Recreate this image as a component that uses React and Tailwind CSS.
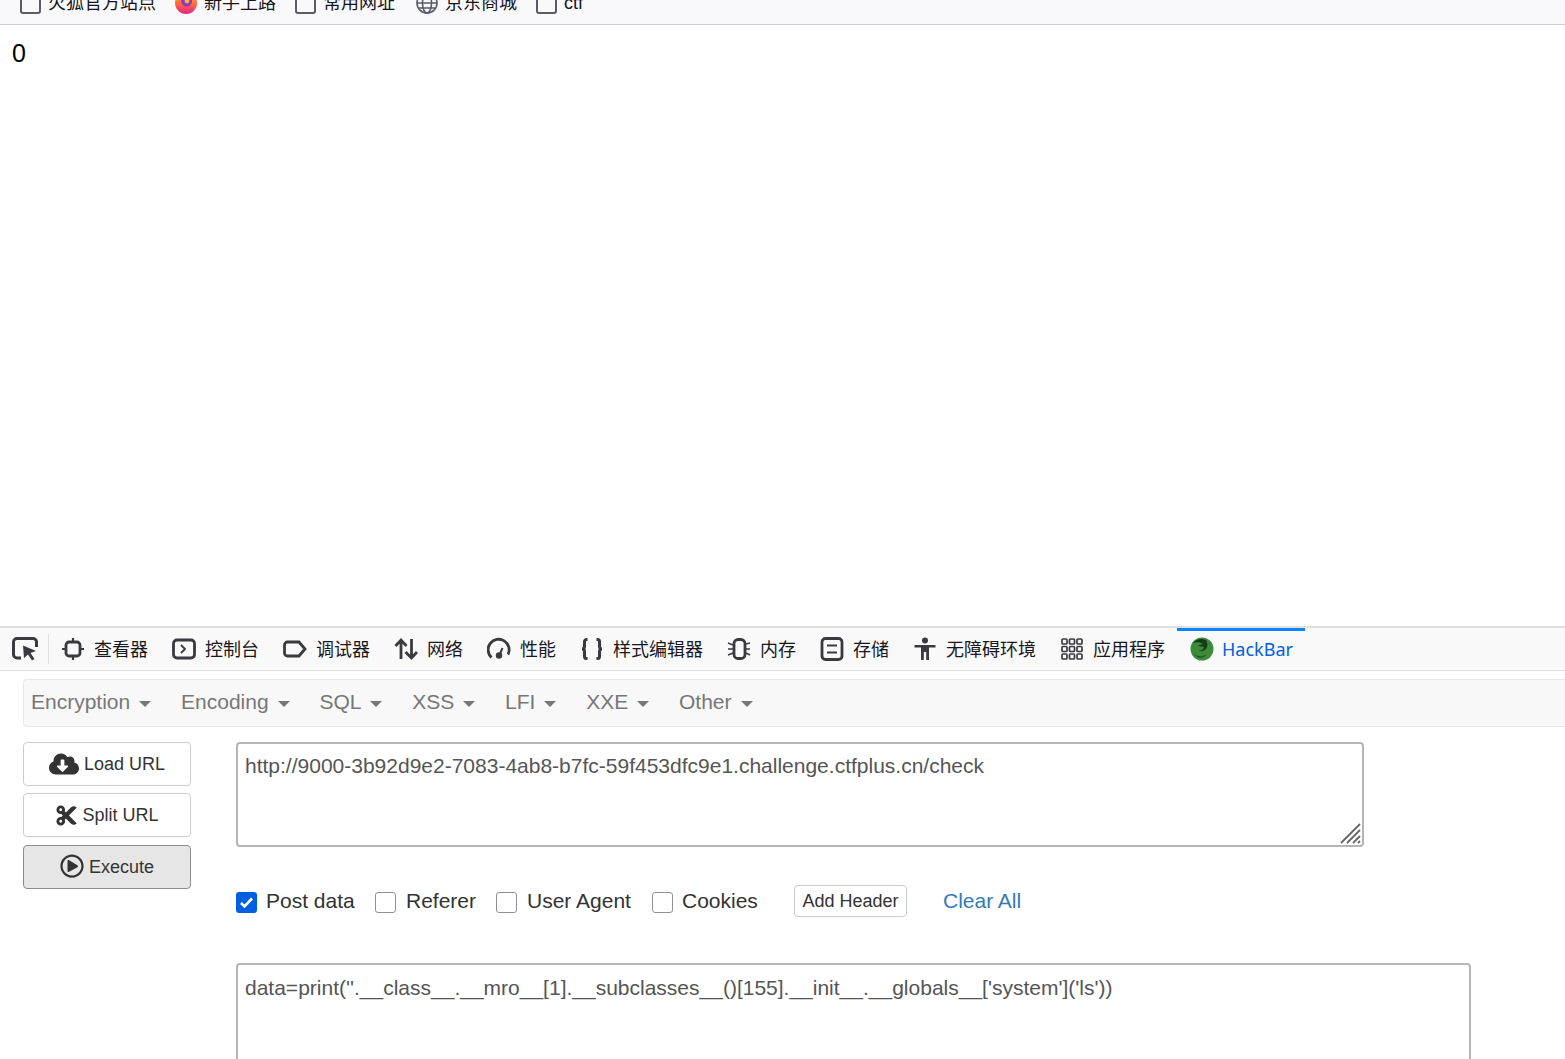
import React from 'react'
import { FaCloudDownloadAlt, FaCut, FaRegPlayCircle } from 'react-icons/fa'

const FolderIcon = () => (
  <span className="block w-[21px] h-[21px] shrink-0 rounded-[3px] border-2 border-[#5b5b66] bg-transparent" />
)

const FirefoxIcon = () => (
  <svg width="22" height="22" viewBox="0 0 22 22" className="shrink-0">
    <defs>
      <linearGradient id="fx" x1="0" y1="0" x2="0" y2="1">
        <stop offset="0" stopColor="#ffb22e" />
        <stop offset="0.55" stopColor="#ff6a3c" />
        <stop offset="1" stopColor="#e8208a" />
      </linearGradient>
    </defs>
    <circle cx="11" cy="11" r="11" fill="url(#fx)" />
    <circle cx="11.5" cy="9" r="5.5" fill="#8a3bc6" />
    <circle cx="12" cy="9" r="2.4" fill="#ffb22e" />
  </svg>
)

const GlobeIcon = () => (
  <svg width="22" height="22" viewBox="0 0 22 22" fill="none" stroke="#5b5b66" strokeWidth="1.6" className="shrink-0">
    <circle cx="11" cy="11" r="10" />
    <ellipse cx="11" cy="11" rx="4.5" ry="10" />
    <path d="M1 11h20M2.5 6h17M2.5 16h17" />
  </svg>
)

const tabIcon = (children, w = 24) => (
  <svg width={w} height="24" viewBox="0 0 24 24" fill="none" stroke="#3a3a3f" strokeWidth="2.8" className="shrink-0">
    {children}
  </svg>
)

const InspectorIcon = () =>
  tabIcon(
    <>
      <rect x="5" y="5" width="14" height="14" rx="3" />
      <path d="M12 1v4M12 19v4M1 12h4M19 12h4" strokeWidth="2.2" />
    </>
  )

const ConsoleIcon = () =>
  tabIcon(
    <>
      <rect x="1.5" y="3" width="21" height="18" rx="3.5" />
      <path d="M9 8l4 4-4 4" strokeWidth="1.8" />
    </>
  )

const DebuggerIcon = () =>
  tabIcon(<path d="M4.5 5h11.5l6 7-6 7H4.5a3 3 0 0 1-3-3V8a3 3 0 0 1 3-3z" />)

const NetworkIcon = () =>
  tabIcon(<path d="M7 22V3M1.500 9L7 3l5.500 6M17.500 2v19M11.500 15l6 6 5.500-6" />)

const PerfIcon = () =>
  tabIcon(
    <>
      <path d="M4.5 20.5A10.5 10.5 0 1 1 21 17.5" />
      <circle cx="12" cy="18.5" r="3.2" fill="#3a3a3f" stroke="none" />
      <path d="M12.5 18l3-7" strokeWidth="2" />
    </>
  )

const StyleIcon = () =>
  tabIcon(
    <path
      strokeWidth="3"
      d="M7.500 2.500H6.500a2 2 0 0 0-2 2v5c0 1.500-1 2.500-2.500 2.500 1.500 0 2.500 1 2.500 2.500v5a2 2 0 0 0 2 2h1M16.500 2.500h1a2 2 0 0 1 2 2v5c0 1.500 1 2.500 2.500 2.500-1.500 0-2.500 1-2.500 2.500v5a2 2 0 0 1-2 2h-1"
    />
  )

const MemoryIcon = () =>
  tabIcon(
    <>
      <rect x="7" y="2.500" width="11" height="19" rx="4" />
      <path d="M1 6l5 2M1 12h5M1 18l5-2M19 7l4-1M19 12h4M19 16l4 2" strokeWidth="1.400" />
    </>
  )

const StorageIcon = () =>
  tabIcon(
    <>
      <rect x="2" y="1.500" width="20" height="21" rx="3.500" />
      <path d="M7 8.500h10M7 15.500h10" strokeWidth="2" />
    </>
  )

const A11yIcon = () => (
  <svg width="24" height="24" viewBox="0 0 24 24" fill="#3a3a3f" className="shrink-0">
    <circle cx="12" cy="3.500" r="3" />
    <path d="M1.500 8h21v2.500H16V23h-2.800v-8h-2.400v8H8V10.500H1.500z" />
  </svg>
)

const AppsIcon = () => (
  <svg width="24" height="24" viewBox="0 0 24 24" fill="none" stroke="#3a3a3f" strokeWidth="1.700" className="shrink-0">
    {[2, 9.500, 17].map((y) =>
      [2, 9.500, 17].map((x) => <rect key={`${x}-${y}`} x={x} y={y} width="5" height="5" rx="1" />)
    )}
  </svg>
)

const HackBarIcon = () => (
  <svg width="24" height="24" viewBox="0 0 24 24" className="shrink-0">
    <circle cx="12" cy="12" r="11.500" fill="#3c8a3a" />
    <path d="M3 6c3-4 8-5 13-3 1 2 2 4 1 7-1 3-4 5-8 4 3-1 5-2 5-4-2 0-4-1-6-1 1-1 3-2 5-2-3-2-7-2-10-1z" fill="#143d14" />
    <path d="M4 17c4 3 9 3 13 0-3 5-10 5-13 0z" fill="#1f5a20" />
  </svg>
)

const PickIcon = () => (
  <svg width="26" height="24" viewBox="0 0 26 24" fill="none" stroke="#3a3a3f" strokeWidth="3" className="shrink-0">
    <path d="M9 21H5a3.500 3.500 0 0 1-3.500-3.500V5A3.500 3.500 0 0 1 5 1.500h16A3.500 3.500 0 0 1 24.500 5v5" />
    <path d="M11 8.500l13 5.500-5.500 2 4 6-2.500 1.500-4-6-4 3.500z" fill="#3a3a3f" stroke="none" />
  </svg>
)

const tabs = [
  { label: '查看器', Icon: InspectorIcon },
  { label: '控制台', Icon: ConsoleIcon },
  { label: '调试器', Icon: DebuggerIcon },
  { label: '网络', Icon: NetworkIcon },
  { label: '性能', Icon: PerfIcon },
  { label: '样式编辑器', Icon: StyleIcon },
  { label: '内存', Icon: MemoryIcon },
  { label: '存储', Icon: StorageIcon },
  { label: '无障碍环境', Icon: A11yIcon },
  { label: '应用程序', Icon: AppsIcon },
]

const menus = ['Encryption', 'Encoding', 'SQL', 'XSS', 'LFI', 'XXE', 'Other']

function Bookmark({ icon, label, className = 'mr-[19px]' }) {
  return (
    <div className={`flex items-center gap-[7px] ${className}`}>
      {icon}
      <span className="text-[18px] leading-[24px] text-[#15141a]">{label}</span>
    </div>
  )
}

function SideButton({ icon, label, active, gap = 'gap-[5px]' }) {
  return (
    <button
      className={`h-[44px] w-full flex items-center justify-center ${gap} rounded-[4px] border text-[18px] text-[#333] ${
        active ? 'bg-[#e6e6e6] border-[#8c8c8c]' : 'bg-white border-[#ccc]'
      }`}
    >
      {icon}
      {label}
    </button>
  )
}

function Check({ label, checked, className, labelGap = 'ml-[9px]' }) {
  return (
    <label className={`flex items-center ${className}`}>
      {checked ? (
        <span className="w-[21px] h-[21px] rounded-[3px] bg-[#0060df] flex items-center justify-center mt-[3px]">
          <svg width="15" height="15" viewBox="0 0 15 15" fill="none" stroke="white" strokeWidth="2.600">
            <path d="M2 8l3.500 3.500L13 3.500" />
          </svg>
        </span>
      ) : (
        <span className="w-[21px] h-[21px] rounded-[3px] border border-[#8f8f9d] bg-white mt-[3px]" />
      )}
      <span className={`${labelGap} text-[21px] leading-[24px] text-[#333]`}>{label}</span>
    </label>
  )
}

export default function App() {
  return (
    <div className="h-[1059px] w-full overflow-hidden bg-white flex flex-col font-['Liberation_Sans','Noto_Sans_CJK_SC',sans-serif]">
      {/* bookmarks toolbar, cut off by the top of the shot */}
      <div className="h-[25px] shrink-0 overflow-hidden bg-[#f9f9fb] border-b border-[#ccc]">
        <div className="flex items-center pl-[20px] -mt-[9px]">
          <Bookmark icon={<FolderIcon />} label="火狐官方站点" />
          <Bookmark icon={<FirefoxIcon />} label="新手上路" />
          <Bookmark icon={<FolderIcon />} label="常用网址" className="mr-[21px]" />
          <Bookmark icon={<GlobeIcon />} label="京东商城" />
          <Bookmark icon={<FolderIcon />} label="ctf" />
        </div>
      </div>

      <div className="h-[601px] shrink-0 pl-[12px] pt-[14px] text-[25px] leading-[28px] text-black">0</div>

      {/* devtools */}
      <div className="flex-1 min-h-0 flex flex-col">
        <div className="h-[45px] shrink-0 flex items-stretch bg-[#f9f9fa] border-t-2 border-b border-[#e0e0e2]">
          <div className="w-[49px] shrink-0 flex items-center pl-[12px] relative">
            <PickIcon />
            <span className="absolute right-0 top-[6px] h-[30px] w-px bg-[#e0e0e2]" />
          </div>
          <div className="flex items-stretch">
            {tabs.map(({ label, Icon }) => (
              <div key={label} className="flex items-center gap-[9px] px-3">
                <Icon />
                <span className="text-[18px] leading-[24px] text-[#18181a] mt-px">{label}</span>
              </div>
            ))}
            <div className="flex items-center gap-2 pl-[13px] pr-3 border-t-[3px] border-[#0a84ff]">
              <span className="-mt-[3px]">
                <HackBarIcon />
              </span>
              <span className="text-[18px] leading-[24px] text-[#0060df] font-['Noto_Sans',sans-serif] -mt-[3px]">HackBar</span>
            </div>
          </div>
        </div>

        <div className="flex-1 min-h-0 pl-[23px] pt-2">
          <div className="h-[48px] flex items-center pl-[7px] bg-[#f8f8f8] border border-r-0 border-[#e7e7e7] rounded-l-[4px]">
            {menus.map((m) => (
              <div key={m} className="flex items-center mr-[29.8px] -mt-[2px]">
                <span className="text-[21px] leading-[24px] text-[#777]">{m}</span>
                <span className="ml-[9px] mt-[3px] w-0 h-0 border-t-[6px] border-x-[6px] border-t-[#777] border-x-transparent" />
              </div>
            ))}
          </div>

          <div className="mt-[15px] flex items-start gap-[45px]">
            <div className="w-[168px] shrink-0 flex flex-col">
              <SideButton icon={<FaCloudDownloadAlt className="text-[30px]" />} label="Load URL" />
              <div className="mt-[7px]">
                <SideButton icon={<FaCut className="text-[23px]" />} label="Split URL" gap="gap-1" />
              </div>
              <div className="mt-2">
                <SideButton icon={<FaRegPlayCircle className="text-[24px] -mt-[3px]" />} label="Execute" active />
              </div>
            </div>

            <div className="flex-1 min-w-0 flex flex-col">
              <div className="relative w-[1128px] h-[105px] shrink-0 rounded-[4px] border-2 border-[#b5b5b5] bg-white px-[7px] pt-[10px] text-[21px] leading-[24px] text-[#555]">
                http://9000-3b92d9e2-7083-4ab8-b7fc-59f453dfc9e1.challenge.ctfplus.cn/check
                <svg width="22" height="22" viewBox="0 0 22 22" stroke="#666" strokeWidth="1.800" className="absolute right-[1px] bottom-[1px]">
                  <path d="M2 21L21 2M8 21L21 8M14 21l7-7M19 21l2-2" />
                </svg>
              </div>

              <div className="mt-[38px] h-[32px] flex items-center">
                <Check label="Post data" checked className="w-[139px]" />
                <Check label="Referer" className="w-[121px]" labelGap="ml-[10px]" />
                <Check label="User Agent" className="w-[156px]" labelGap="ml-[10px]" />
                <Check label="Cookies" className="w-[142px]" />
                <button className="h-[32px] w-[113px] rounded-[4px] border border-[#ccc] bg-white text-[18px] text-[#333]">Add Header</button>
                <span className="ml-[36px] text-[21px] leading-[24px] text-[#337ab7]">Clear All</span>
              </div>

              <div className="mt-[46px] w-[1235px] h-[200px] shrink-0 rounded-[4px] border-2 border-[#b5b5b5] bg-white px-[7px] pt-[11px] text-[21px] leading-[24px] text-[#555]">
                {"data=print(''.__class__.__mro__[1].__subclasses__()[155].__init__.__globals__['system']('ls'))"}
              </div>
            </div>
          </div>
        </div>
      </div>
    </div>
  )
}
